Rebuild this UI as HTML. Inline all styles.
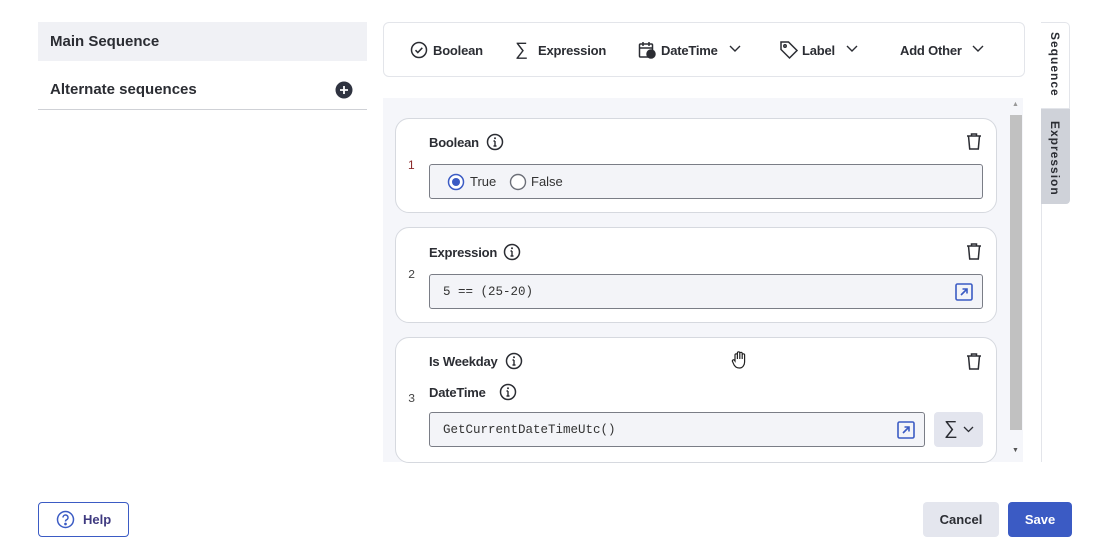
<!DOCTYPE html>
<html><head><meta charset="utf-8"><style>
*{box-sizing:border-box;margin:0;padding:0}
body{width:1112px;height:560px;background:#fff;font-family:"Liberation Sans",sans-serif;color:#2b2d33;position:relative;overflow:hidden}
.abs{position:absolute}
.b{font-weight:bold}
.card{position:absolute;left:395px;width:602px;background:#fff;border:1px solid #d6d9df;border-radius:14px}
.inp{position:absolute;background:#f3f4f8;border:1px solid #7a7d86;border-radius:3px;font-size:13px}
.mono{font-family:"Liberation Mono",monospace;font-size:12.5px;color:#333}
.lbl{position:absolute;font-size:13px;font-weight:bold;color:#2b2d33;letter-spacing:-0.2px}
.num{position:absolute;left:13px;font-size:12px;color:#444}
.tb{position:absolute;top:43px;font-size:13px;font-weight:bold;color:#2b2d33;letter-spacing:-0.2px}
</style></head><body>
<!-- left -->
<div class="abs" style="left:38px;top:22px;width:329px;height:39px;background:#f0f1f5"></div>
<div class="abs b" style="left:50px;top:33px;font-size:15px">Main Sequence</div>
<div class="abs b" style="left:50px;top:81px;font-size:15px">Alternate sequences</div>
<svg class="abs" style="left:335px;top:81px" width="18" height="18"><circle cx="9" cy="9" r="8.5" fill="#2f3340"/><path d="M9 5v8M5 9h8" stroke="#fff" stroke-width="1.8"/></svg>
<div class="abs" style="left:38px;top:109px;width:329px;height:1px;background:#cfd1d6"></div>

<!-- toolbar -->
<div class="abs" style="left:383px;top:22px;width:642px;height:55px;border:1px solid #e3e5ea;border-radius:6px"></div>
<svg class="abs" style="left:410px;top:41px" width="18" height="18" fill="none" stroke="#2b2d33" stroke-width="1.5"><circle cx="9" cy="9" r="7.5"/><path d="M5.5 9.2l2.3 2.3 4.5-4.7"/></svg>
<div class="tb" style="left:433px">Boolean</div>
<div class="tb" style="left:515px;top:39px;font-size:18px;font-weight:normal">∑</div>
<div class="tb" style="left:538px">Expression</div>
<svg class="abs" style="left:638px;top:41px" width="18" height="18" fill="none" stroke="#2b2d33" stroke-width="1.5"><rect x="1.5" y="3" width="13" height="13" rx="1"/><path d="M5 1v4M11 1v4M1.5 7h13"/><circle cx="13" cy="13" r="4" fill="#2b2d33"/></svg>
<div class="tb" style="left:661px">DateTime</div>
<svg class="abs" style="left:729px;top:45px" width="12" height="8" fill="none" stroke="#2b2d33" stroke-width="1.4"><path d="M1 1l5 5 5-5"/></svg>
<svg class="abs" style="left:779px;top:40px" width="20" height="20" fill="none" stroke="#2b2d33" stroke-width="1.5"><path d="M2 2h7.5l8.5 8.5-7.5 7.5L2 9.5z"/><circle cx="6" cy="6" r="1.2"/></svg>
<div class="tb" style="left:802px">Label</div>
<svg class="abs" style="left:846px;top:45px" width="12" height="8" fill="none" stroke="#2b2d33" stroke-width="1.4"><path d="M1 1l5 5 5-5"/></svg>
<div class="tb" style="left:900px">Add Other</div>
<svg class="abs" style="left:972px;top:45px" width="12" height="8" fill="none" stroke="#2b2d33" stroke-width="1.4"><path d="M1 1l5 5 5-5"/></svg>

<!-- right tabs -->
<div class="abs" style="left:1041px;top:204px;width:1px;height:258px;background:#e3e5ea"></div>
<div class="abs" style="left:1041px;top:22px;width:29px;height:87px;background:#fff;border:1px solid #e3e5ea;border-left:none;border-radius:0 5px 0 0"></div>
<div class="abs" style="left:1041px;top:109px;width:29px;height:95px;background:#cfd2d9;border-radius:0 0 4px 0"></div>
<div class="abs b" style="left:1062px;top:32px;transform:rotate(90deg);transform-origin:0 0;font-size:12px;letter-spacing:1px;white-space:nowrap">Sequence</div>
<div class="abs b" style="left:1062px;top:121px;transform:rotate(90deg);transform-origin:0 0;font-size:12px;letter-spacing:1px;white-space:nowrap">Expression</div>

<!-- content -->
<div class="abs" style="left:383px;top:98px;width:640px;height:364px;background:#f5f6fa"></div>
<div class="abs" style="left:1010px;top:115px;width:12px;height:315px;background:#c1c1c1"></div>
<div class="abs" style="left:1012px;top:101px;font-size:7px;color:#999">▲</div>
<div class="abs" style="left:1012px;top:447px;font-size:7px;color:#555">▼</div>

<svg width="0" height="0" style="position:absolute"><defs>
<g id="info"><circle cx="9" cy="9" r="7.5" fill="none" stroke="#2b2d33" stroke-width="1.5"/><path d="M9 8v5M7.5 13h3M7.5 8H9" stroke="#2b2d33" stroke-width="1.4" fill="none"/><circle cx="9" cy="5.3" r="1" fill="#2b2d33"/></g>
<g id="trash" fill="none" stroke="#2b2d33" stroke-width="1.5"><path d="M2 4h14M6.5 4V2h5v2M3.5 4l1.2 13h8.6L14.5 4"/></g>
<g id="open" fill="none" stroke="#3b5bc4" stroke-width="1.6"><rect x="1" y="1" width="16" height="16" rx="1.5"/><path d="M6 12l6-6M7.5 6H12v4.5"/></g>
</defs></svg>

<!-- card1 -->
<div class="card" style="top:118px;height:95px"></div>
<div class="lbl" style="left:429px;top:135px">Boolean</div>
<svg class="abs" style="left:486px;top:133px" width="18" height="18"><use href="#info"/></svg>
<svg class="abs" style="left:965px;top:132px" width="18" height="19"><use href="#trash"/></svg>
<div class="num" style="left:408px;top:158px;color:#8a2a2a">1</div>
<div class="inp" style="left:429px;top:164px;width:554px;height:35px"></div>
<svg class="abs" style="left:447px;top:173px" width="18" height="18"><circle cx="9" cy="9" r="7.5" fill="#fff" stroke="#3b5bc4" stroke-width="1.5"/><circle cx="9" cy="9" r="4" fill="#3b5bc4"/></svg>
<div class="abs" style="left:470px;top:174px;font-size:13px;color:#333">True</div>
<svg class="abs" style="left:509px;top:173px" width="18" height="18"><circle cx="9" cy="9" r="7.5" fill="#fff" stroke="#6c6f78" stroke-width="1.4"/></svg>
<div class="abs" style="left:531px;top:174px;font-size:13px;color:#333">False</div>

<!-- card2 -->
<div class="card" style="top:227px;height:96px"></div>
<div class="lbl" style="left:429px;top:245px">Expression</div>
<svg class="abs" style="left:503px;top:243px" width="18" height="18"><use href="#info"/></svg>
<svg class="abs" style="left:965px;top:242px" width="18" height="19"><use href="#trash"/></svg>
<div class="num mono" style="left:408px;top:268px">2</div>
<div class="inp" style="left:429px;top:274px;width:554px;height:35px"></div>
<div class="abs mono" style="left:443px;top:285px">5 == (25-20)</div>
<svg class="abs" style="left:955px;top:283px" width="18" height="18"><use href="#open"/></svg>

<!-- card3 -->
<div class="card" style="top:337px;height:126px"></div>
<div class="lbl" style="left:429px;top:354px">Is Weekday</div>
<svg class="abs" style="left:505px;top:352px" width="18" height="18"><use href="#info"/></svg>
<svg class="abs" style="left:965px;top:352px" width="18" height="19"><use href="#trash"/></svg>
<svg class="abs" style="left:731px;top:350px" width="18" height="20" fill="#fff" stroke="#222" stroke-width="1.2"><path d="M4 11V5a1.2 1.2 0 0 1 2.4 0v4V3a1.2 1.2 0 0 1 2.4 0v6V3.5a1.2 1.2 0 0 1 2.4 0V9V5a1.2 1.2 0 0 1 2.4 0v7c0 3-2 6-5 6s-4-1-5.5-3L1.5 11.5a1.2 1.2 0 0 1 1.8-1.5z"/></svg>
<div class="lbl" style="left:429px;top:385px">DateTime</div>
<svg class="abs" style="left:499px;top:383px" width="18" height="18"><use href="#info"/></svg>
<div class="num mono" style="left:408px;top:392px">3</div>
<div class="inp" style="left:429px;top:412px;width:496px;height:35px"></div>
<div class="abs mono" style="left:443px;top:423px">GetCurrentDateTimeUtc()</div>
<svg class="abs" style="left:897px;top:421px" width="18" height="18"><use href="#open"/></svg>
<div class="abs" style="left:934px;top:412px;width:49px;height:35px;background:#e3e5ee;border-radius:4px"></div>
<div class="abs" style="left:944px;top:418px;font-size:19px">∑</div>
<svg class="abs" style="left:963px;top:426px" width="11" height="7" fill="none" stroke="#2b2d33" stroke-width="1.3"><path d="M1 1l4.5 4.5L10 1"/></svg>

<!-- footer -->
<div class="abs" style="left:38px;top:502px;width:91px;height:35px;border:1px solid #3b5bc4;border-radius:4px"></div>
<svg class="abs" style="left:56px;top:510px" width="19" height="19" fill="none" stroke="#3b5bc4" stroke-width="1.5"><circle cx="9.5" cy="9.5" r="8"/><path d="M7 7.5a2.5 2.5 0 1 1 3.5 2.3c-.8.4-1 .9-1 1.7"/><circle cx="9.5" cy="14" r=".6" fill="#3b5bc4"/></svg>
<div class="abs b" style="left:83px;top:512px;font-size:13px;color:#3f3a80">Help</div>
<div class="abs b" style="left:923px;top:502px;width:76px;height:35px;background:#e4e6ee;border-radius:4px;font-size:13px;text-align:center;line-height:35px">Cancel</div>
<div class="abs b" style="left:1008px;top:502px;width:64px;height:35px;background:#3b5bc4;border-radius:4px;font-size:13px;text-align:center;line-height:35px;color:#fff">Save</div>
</body></html>
